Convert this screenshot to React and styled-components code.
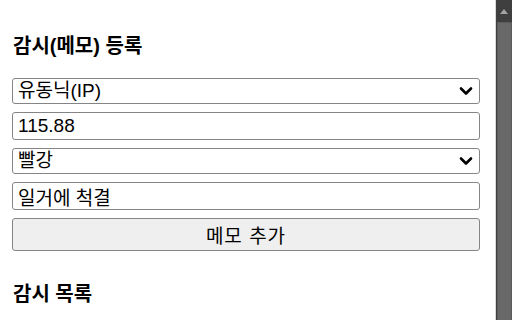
import React from 'react'
import styled, { createGlobalStyle } from 'styled-components'

const GlobalStyle = createGlobalStyle`
  html, body {
    margin: 0;
    padding: 0;
    background: #fff;
    overflow: hidden;
  }
  body {
    font-family: "Liberation Sans", "Noto Sans CJK KR", sans-serif;
    color: #000;
  }
  * { box-sizing: border-box; }
`

const Page = styled.div`
  display: flow-root;
  width: 495px;
  height: 320px;
  padding: 0 15px 0 12px;
`

const Title = styled.h3`
  margin: ${props => props.top}px 0 ${props => props.bottom}px 0;
  font-size: 20px;
  line-height: 24px;
  font-weight: 700;
  padding-left: 1px;
`

const Form = styled.div`
  display: flex;
  flex-direction: column;
  gap: 8px;
`

const SelectWrap = styled.div`
  position: relative;
  height: 26px;
`

const Select = styled.select`
  appearance: none;
  width: 100%;
  height: 100%;
  margin: 0;
  padding: 0 30px 0 5px;
  font: inherit;
  font-size: 19px;
  line-height: 24px;
  color: #000;
  background: #fff;
  border: 1px solid #858585;
  border-radius: 3px;
  outline: none;
`

const Chevron = styled.svg`
  position: absolute;
  right: 7px;
  top: 50%;
  transform: translateY(-50%);
  width: 14px;
  height: 10px;
  pointer-events: none;
`

const Input = styled.input`
  width: 100%;
  height: 28px;
  margin: 0;
  padding: 0 5px;
  font: inherit;
  font-size: 19px;
  color: #000;
  background: #fff;
  border: 1px solid #858585;
  border-radius: 3px;
  outline: none;
`

const Button = styled.button`
  width: 100%;
  height: 33px;
  margin: 0;
  padding: 0;
  font: inherit;
  font-size: 19px;
  letter-spacing: 1px;
  color: #000;
  background: #efefef;
  border: 1px solid #858585;
  border-radius: 3px;
`

const ScrollTrack = styled.div`
  position: fixed;
  top: 0;
  right: 0;
  width: 17px;
  height: 100vh;
  background: #3f3f3f;
  border-left: 1px solid #d8d8d8;
  overflow: hidden;
`

const ScrollArrow = styled.div`
  position: absolute;
  top: 9px;
  left: 50%;
  transform: translateX(-50%);
  width: 0;
  height: 0;
  border-left: 4px solid transparent;
  border-right: 4px solid transparent;
  border-bottom: 5px solid #a3a3a3;
`

const ScrollThumb = styled.div`
  position: absolute;
  top: 22px;
  left: 1px;
  right: 0;
  bottom: 0;
  background: #686868;
  border: 1px solid #5a5a5a;
  border-bottom: none;
`

const ChevronIcon = () => (
  <Chevron viewBox="0 0 14 10">
    <path d="M2 2.5 L7 7.5 L12 2.5" fill="none" stroke="#000" strokeWidth="2.6" strokeLinecap="round" strokeLinejoin="round" />
  </Chevron>
)

const App = () => {
  return (
    <>
      <GlobalStyle />
      <Page>
        <Title top={34} bottom={20}>감시(메모) 등록</Title>
        <Form>
          <SelectWrap>
            <Select defaultValue="ip">
              <option value="ip">유동닉(IP)</option>
              <option value="id">고정닉(ID)</option>
            </Select>
            <ChevronIcon />
          </SelectWrap>
          <Input defaultValue="115.88" />
          <SelectWrap>
            <Select defaultValue="red">
              <option value="red">빨강</option>
              <option value="blue">파랑</option>
            </Select>
            <ChevronIcon />
          </SelectWrap>
          <Input defaultValue="일거에 척결" />
          <Button>메모 추가</Button>
        </Form>
        <Title top={31} bottom={0}>감시 목록</Title>
      </Page>
      <ScrollTrack>
        <ScrollArrow />
        <ScrollThumb />
      </ScrollTrack>
    </>
  )
}

export default App
